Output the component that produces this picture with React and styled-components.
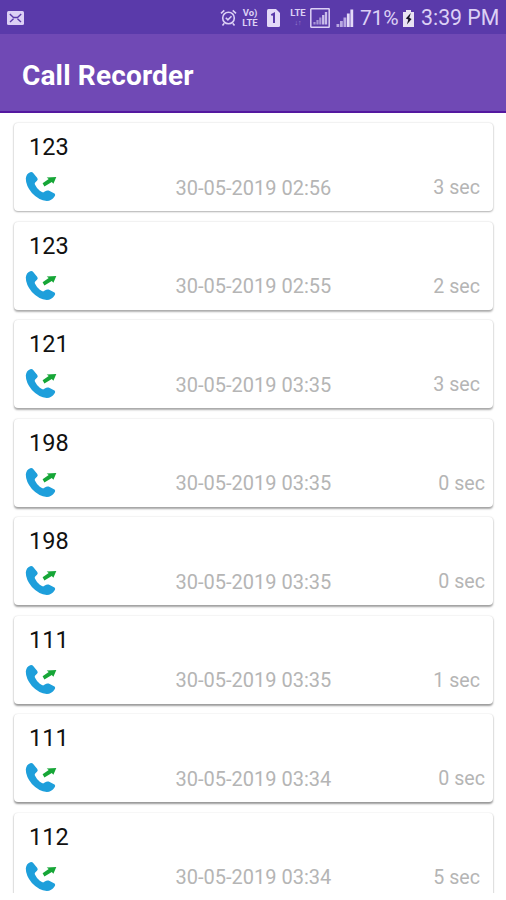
import React from 'react'
import styled, { createGlobalStyle } from 'styled-components'

const GlobalStyle = createGlobalStyle`
  * {
    box-sizing: border-box;
  }
  body {
    margin: 0;
    background-color: #fff;
    font-family: Roboto, "Liberation Sans", sans-serif;
  }
`
const Screen = styled.div`
  display: flex;
  flex-direction: column;
  width: 506px;
  height: 900px;
  padding-bottom: 7px;
  overflow: hidden;
  background-color: #fff;
`
const StatusBar = styled.div`
  display: flex;
  align-items: center;
  flex: none;
  height: 34px;
  padding: 2px 7px 0;
  background-color: #5a3aaa;
  color: #dcd0f5;
`
const StatusIcons = styled.div`
  display: flex;
  align-items: center;
  margin-left: auto;
`
const StatusIcon = styled.svg`
  display: block;
  flex: none;
  margin-right: ${(props) => props.$gap || 0}px;
`
const Stack = styled.div`
  display: flex;
  flex-direction: column;
  align-items: center;
  width: 18px;
  margin-right: ${(props) => props.$gap}px;
  font-size: 9.5px;
  font-weight: 700;
  line-height: 10px;
  white-space: nowrap;
`
const Small = styled.span`
  font-size: 7px;
  opacity: 0.5;
`
const Percent = styled.span`
  width: 39px;
  margin-right: 4px;
  font-size: 21px;
  line-height: 32px;
  white-space: nowrap;
  letter-spacing: -0.2px;
`
const Clock = styled.span`
  width: 78px;
  font-size: 21.3px;
  line-height: 32px;
  white-space: nowrap;
`
const AppBar = styled.header`
  display: flex;
  align-items: center;
  flex: none;
  height: 79px;
  padding: 7px 22px 0;
  background-color: #7049b5;
  border-bottom: 2px solid #5418a0;
`
const Title = styled.h1`
  margin: 0;
  font-size: 28px;
  font-weight: 700;
  line-height: 32px;
  letter-spacing: 0.15px;
  color: #fff;
`
const List = styled.main`
  flex: 1;
  min-height: 0;
  padding: 10px 13px 0 14px;
  overflow: hidden;
`
const Card = styled.div`
  height: 88px;
  margin-bottom: 10.5px;
  padding: 8px 8px 0 11px;
  border-radius: 4px;
  background-color: #fff;
  box-shadow:
    0 ${(props) => 1 + props.$depth * 0.12}px 2px rgba(0, 0, 0, ${(props) => 0.28 + props.$depth * 0.02}),
    0 0 2px rgba(0, 0, 0, ${(props) => 0.16 - props.$depth * 0.015});
`
const Number = styled.div`
  padding-left: 4px;
  font-size: 23.5px;
  line-height: 32px;
  color: #111;
`
const Details = styled.div`
  display: grid;
  grid-template-columns: 150.5px 1fr auto;
  align-items: center;
  height: 49px;
`
const CallIcon = styled.svg`
  display: block;
  margin-top: -1px;
`
const DateText = styled.span`
  font-size: 20px;
  line-height: 24px;
  color: #b5b5b5;
`
const Duration = styled(DateText)`
  padding-right: ${(props) => (props.$zero ? 0 : 5)}px;
  font-size: 19.6px;
  line-height: 25px;
`

const calls = [
  { number: '123', date: '30-05-2019 02:56', seconds: 3 },
  { number: '123', date: '30-05-2019 02:55', seconds: 2 },
  { number: '121', date: '30-05-2019 03:35', seconds: 3 },
  { number: '198', date: '30-05-2019 03:35', seconds: 0 },
  { number: '198', date: '30-05-2019 03:35', seconds: 0 },
  { number: '111', date: '30-05-2019 03:35', seconds: 1 },
  { number: '111', date: '30-05-2019 03:34', seconds: 0 },
  { number: '112', date: '30-05-2019 03:34', seconds: 5 },
]

const MailIcon = () => (
  <StatusIcon width="17" height="14" viewBox="0 0 17 14">
    <rect width="17" height="14" rx="1.5" fill="#dcd0f5" />
    <path d="M2.8 3l3.7 3.5h4L14.2 3M3 11l3.5-3.2M14 11l-3.5-3.2" fill="none" stroke="#5a3aaa" strokeWidth="1.4" />
  </StatusIcon>
)

const AlarmIcon = () => (
  <StatusIcon $gap={4} width="17" height="18" viewBox="0 0 17 18" fill="none" stroke="#dcd0f5" strokeWidth="1.6">
    <circle cx="8.5" cy="9" r="5.8" />
    <path d="M5.8 8.8l2.1 2.1 3.6-3.6M1 4.3l3.3-2.9M16 4.3l-3.3-2.9M4.3 14.2l-1.8 2.2M12.7 14.2l1.8 2.2" />
  </StatusIcon>
)

const SimIcon = () => (
  <StatusIcon $gap={9} width="13" height="18" viewBox="0 0 13 18">
    <path d="M1.5 0H9l4 4v12.5q0 1.5-1.5 1.5h-10Q0 18 0 16.5v-15Q0 0 1.5 0z" fill="#e4daf8" />
    <path d="M4.3 6.2L7 4.7V14" fill="none" stroke="#5a3aaa" strokeWidth="2" />
  </StatusIcon>
)

const BoxedSignal = () => (
  <StatusIcon $gap={6} width="20" height="20" viewBox="0 0 20 20">
    <rect x="0.8" y="0.8" width="18.4" height="18.4" rx="0.5" fill="none" stroke="#dcd0f5" strokeWidth="1.5" />
    <path d="M4.5 14v2.5M7.5 12v4.5M10.3 9.5v7" stroke="#a794d6" strokeWidth="2.2" />
    <path d="M13.2 7v9.5M16 4v12.5" stroke="#c9bcea" strokeWidth="2.3" />
  </StatusIcon>
)

const Signal = () => (
  <StatusIcon $gap={6} width="18" height="18" viewBox="0 0 18 18">
    <path d="M1.9 15V18M5.4 12V18M8.9 8.5V18" stroke="#b9a8e2" strokeWidth="2.8" />
    <path d="M12.3 4.5V18M15.8 .5V18" stroke="#e4daf8" strokeWidth="2.8" />
  </StatusIcon>
)

const BatteryIcon = () => (
  <StatusIcon $gap={7} width="11" height="17" viewBox="0 0 11 17">
    <path d="M3 0h5v2h3v15H0V2h3z" fill="#e9e3f3" />
    <path d="M7.8 3L2.8 8.4l2.5 1.2-1.4 4.8 4.7-5.5-2.3-1.2z" fill="#171425" />
  </StatusIcon>
)

const OutgoingCall = () => (
  <CallIcon width="33" height="32" viewBox="0 0 33 32">
    <path
      d="M5.2 1.2Q7 .5 8.4 2.2L12.3 7Q13.3 8.5 12 9.8L10.2 11.6Q9.4 12.4 9.9 13.6Q11.6 17.3 14.8 19.8Q16.4 21.2 18.1 21.4Q19 21.3 19.8 20.6Q21.8 19 23.7 19.6L29 22.3Q31 23.4 29.5 25.6Q26.6 30 21.8 30Q13.8 29.2 6.9 21.9Q.8 14.8 .8 7.5Q1.2 2.8 5.2 1.2z"
      fill="#1e9fdb"
    />
    <path d="M17.6 12.3l6.1-4.2-2-1.6L31.3 6l-2.9 6.8-1.6-1.8-7.4 4.5z" fill="#16a637" />
  </CallIcon>
)

const App = () => {
  return (
    <>
      <GlobalStyle />
      <Screen>
        <StatusBar>
          <MailIcon />
          <StatusIcons>
            <AlarmIcon />
            <Stack $gap={8}>
              <span>Vo)</span>
              <span>LTE</span>
            </Stack>
            <SimIcon />
            <Stack $gap={3}>
              <span>LTE</span>
              <Small>↓↑</Small>
            </Stack>
            <BoxedSignal />
            <Signal />
            <Percent>71%</Percent>
            <BatteryIcon />
            <Clock>3:39 PM</Clock>
          </StatusIcons>
        </StatusBar>
        <AppBar>
          <Title>Call Recorder</Title>
        </AppBar>
        <List>
          {calls.map((call, i) => (
            <Card key={i} $depth={i}>
              <Number>{call.number}</Number>
              <Details>
                <OutgoingCall />
                <DateText>{call.date}</DateText>
                <Duration $zero={call.seconds === 0}>{call.seconds} sec</Duration>
              </Details>
            </Card>
          ))}
        </List>
      </Screen>
    </>
  )
}

export default App
